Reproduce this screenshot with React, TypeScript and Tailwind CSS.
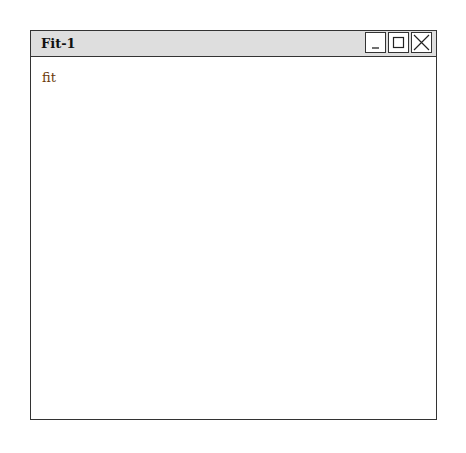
const WinButton = ({ children }: { children: React.ReactNode }) => (
  <div className="w-[21px] h-[21px] border border-[#333] bg-white flex items-center justify-center">
    {children}
  </div>
);

const App = () => {
  return (
    <div className="w-[466px] h-[453px] bg-white pt-[30px] pl-[30px]">
      <div className="w-[407px] h-[390px] border border-[#333] flex flex-col bg-white">
        <div className="h-[26px] bg-[#dedede] border-b border-[#333] flex items-start justify-between pl-[10px] pr-[4px] pt-[1px]">
          <span
            className="font-bold text-[13px] text-[#111] leading-[24px]"
            style={{ fontFamily: '"DejaVu Serif", serif' }}
          >
            Fit-1
          </span>
          <div className="flex gap-[2px]">
            <WinButton>
              <svg width="19" height="19" viewBox="0 0 19 19">
                <line x1="6" y1="15" x2="13" y2="15" stroke="#222" strokeWidth="1.3" />
              </svg>
            </WinButton>
            <WinButton>
              <svg width="19" height="19" viewBox="0 0 19 19">
                <rect x="4.5" y="4.5" width="10" height="10" fill="none" stroke="#222" strokeWidth="1.2" />
              </svg>
            </WinButton>
            <WinButton>
              <svg width="19" height="19" viewBox="0 0 19 19">
                <path d="M2 2 L17 17 M17 2 L2 17" stroke="#222" strokeWidth="1.2" />
              </svg>
            </WinButton>
          </div>
        </div>
        <div className="pl-[11px] pt-[7px]">
          <span
            className="text-[13px] text-[#6b3a0a]"
            style={{ fontFamily: '"DejaVu Serif", serif' }}
          >
            fit
          </span>
        </div>
      </div>
    </div>
  );
};

export default App;
